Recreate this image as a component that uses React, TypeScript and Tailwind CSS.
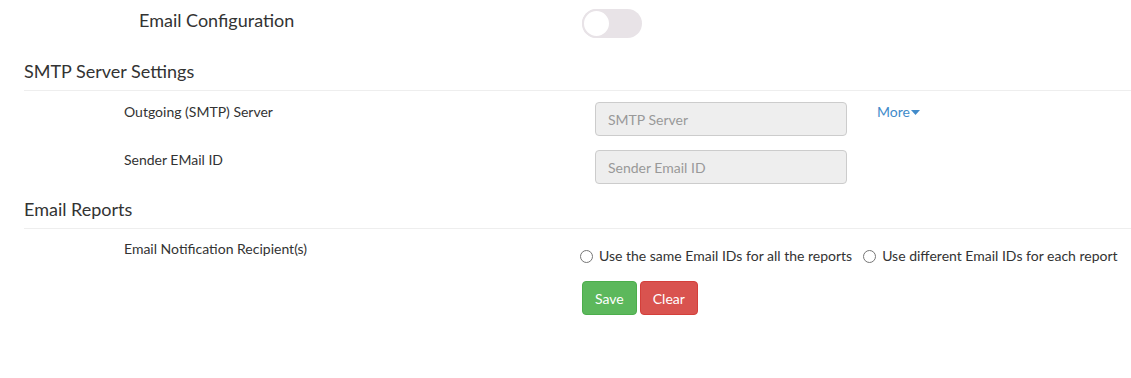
import React, { useState } from 'react';

const App: React.FC = () => {
  const [enabled, setEnabled] = useState(false);
  const [mode, setMode] = useState<string>('');

  return (
    <div className="w-[1131px] h-[378px] bg-white text-[#333] pl-6" style={{ fontFamily: 'Lato, "Open Sans", sans-serif' }}>
      {/* Email configuration toggle */}
      <div className="flex items-start h-[38px]">
        <div className="w-[558px] pl-[115px] pt-[8px] text-[18px] leading-[24px]">Email Configuration</div>
        <button
          onClick={() => setEnabled(!enabled)}
          className="mt-[9px] w-[60px] h-[29px] rounded-full bg-[#e8e3e7] flex items-center"
        >
          <span className="w-[29px] h-[29px] rounded-full bg-white border-2 border-[#e8e3e7]" />
        </button>
      </div>

      {/* SMTP section */}
      <div className="mt-[21px] pb-[7px] border-b border-[#eeeeee] text-[18px] leading-[24px]">SMTP Server Settings</div>

      <div className="flex items-start mt-[11px]">
        <div className="w-[571px] pl-[100px] text-[14px] leading-[20px]">Outgoing (SMTP) Server</div>
        <input
          disabled
          placeholder="SMTP Server"
          className="w-[252px] h-[34px] rounded-[4px] border border-[#cccccc] bg-[#eeeeee] px-3 text-[14px] placeholder:text-[#999]"
        />
        <a className="ml-[30px] text-[14px] leading-[20px] text-[#428bca] flex items-center cursor-pointer">
          More
          <svg width="9" height="6" viewBox="0 0 9 6" className="ml-[1px] mt-[1px]">
            <path d="M0 0h9L4.5 5z" fill="#428bca" />
          </svg>
        </a>
      </div>

      <div className="flex items-start mt-[14px]">
        <div className="w-[571px] pl-[100px] text-[14px] leading-[20px]">Sender EMail ID</div>
        <input
          disabled
          placeholder="Sender Email ID"
          className="w-[252px] h-[34px] rounded-[4px] border border-[#cccccc] bg-[#eeeeee] px-3 text-[14px] placeholder:text-[#999]"
        />
      </div>

      {/* Email reports */}
      <div className="mt-[13px] pb-[7px] border-b border-[#eeeeee] text-[18px] leading-[24px]">Email Reports</div>

      <div className="flex items-start mt-[10px]">
        <div className="w-[556px] pl-[100px] text-[14px] leading-[20px]">Email Notification Recipient(s)</div>
        <div className="flex flex-col pt-[7px]">
          <div className="flex items-center text-[14px] leading-[20px]">
            <label className="flex items-center cursor-pointer" onClick={() => setMode('same')}>
              <span className="w-[13px] h-[13px] rounded-full border border-[#767676] bg-white flex items-center justify-center">
                {mode === 'same' && <span className="w-[7px] h-[7px] rounded-full bg-[#333]" />}
              </span>
              <span className="ml-[6px]">Use the same Email IDs for all the reports</span>
            </label>
            <label className="flex items-center cursor-pointer ml-[11px]" onClick={() => setMode('diff')}>
              <span className="w-[13px] h-[13px] rounded-full border border-[#767676] bg-white flex items-center justify-center">
                {mode === 'diff' && <span className="w-[7px] h-[7px] rounded-full bg-[#333]" />}
              </span>
              <span className="ml-[6px]">Use different Email IDs for each report</span>
            </label>
          </div>
          <div className="flex gap-[3px] mt-[15px] ml-[2px]">
            <button className="h-[34px] px-3 rounded-[4px] bg-[#5cb85c] border border-[#4cae4c] text-white text-[14px]">Save</button>
            <button className="h-[34px] px-3 rounded-[4px] bg-[#d9534f] border border-[#d43f3a] text-white text-[14px]">Clear</button>
          </div>
        </div>
      </div>
    </div>
  );
};

export default App;
